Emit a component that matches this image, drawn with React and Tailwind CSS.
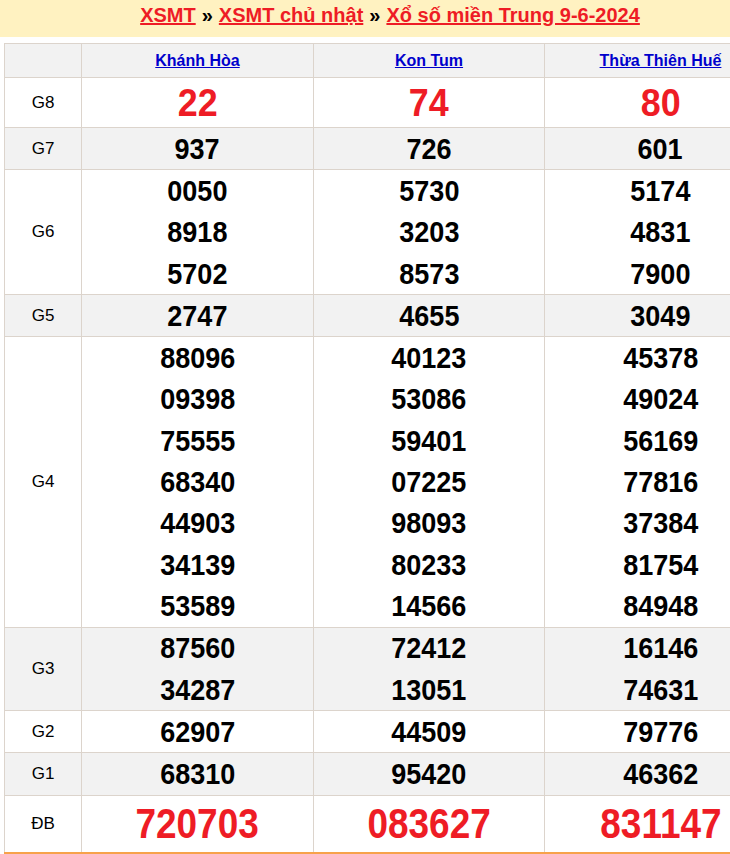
import React from "react";

const provinces = ["Khánh Hòa", "Kon Tum", "Thừa Thiên Huế"];

const rows = [
  { label: "G8", big: true, data: [["22"], ["74"], ["80"]] },
  { label: "G7", data: [["937"], ["726"], ["601"]] },
  {
    label: "G6",
    data: [
      ["0050", "8918", "5702"],
      ["5730", "3203", "8573"],
      ["5174", "4831", "7900"],
    ],
  },
  { label: "G5", data: [["2747"], ["4655"], ["3049"]] },
  {
    label: "G4",
    data: [
      ["88096", "09398", "75555", "68340", "44903", "34139", "53589"],
      ["40123", "53086", "59401", "07225", "98093", "80233", "14566"],
      ["45378", "49024", "56169", "77816", "37384", "81754", "84948"],
    ],
  },
  {
    label: "G3",
    data: [
      ["87560", "34287"],
      ["72412", "13051"],
      ["16146", "74631"],
    ],
  },
  { label: "G2", data: [["62907"], ["44509"], ["79776"]] },
  { label: "G1", data: [["68310"], ["95420"], ["46362"]] },
  { label: "ĐB", db: true, data: [["720703"], ["083627"], ["831147"]] },
];

function Num({ value, big, db }) {
  if (db) {
    return (
      <div className="h-[56px] flex items-center justify-center">
        <span className="inline-block text-[42px] font-bold text-[#ee1c25] scale-x-[0.88] leading-none">
          {value}
        </span>
      </div>
    );
  }
  if (big) {
    return (
      <div className="h-[49px] flex items-center justify-center">
        <span className="inline-block text-[39px] font-bold text-[#ee1c25] scale-x-[0.92] leading-none">
          {value}
        </span>
      </div>
    );
  }
  return (
    <div className="h-[41.3px] flex items-center justify-center">
      <span className="inline-block text-[30px] font-bold text-black scale-x-[0.9] leading-none">
        {value}
      </span>
    </div>
  );
}

export default function App() {
  return (
    <div className="w-[730px] overflow-hidden bg-white">
      <div
        className="w-[780px]"
        style={{ fontFamily: '"Liberation Sans", Arial, sans-serif' }}
      >
        <div className="h-[37px] bg-[#fff2c1] flex items-start justify-center pt-[3px] text-[20px] leading-[24px] font-bold text-black">
          <a href="#" className="text-[#ee1c25] underline">XSMT</a>
          <span className="mx-[6px]">»</span>
          <a href="#" className="text-[#ee1c25] underline">XSMT chủ nhật</a>
          <span className="mx-[6px]">»</span>
          <a href="#" className="text-[#ee1c25] underline">Xổ số miền Trung 9-6-2024</a>
        </div>

        <div className="px-[4px] pt-[6px]">
          <table className="w-[772px] border-collapse table-fixed border-b-[3px] border-b-[#f7a24a]">
            <colgroup>
              <col className="w-[77px]" />
              <col className="w-[232px]" />
              <col className="w-[231px]" />
              <col className="w-[232px]" />
            </colgroup>
            <thead>
              <tr className="bg-[#f2f2f2] h-[34px]">
                <th className="border border-[#dcd4cc]"></th>
                {provinces.map((p) => (
                  <th key={p} className="border border-[#dcd4cc] p-0">
                    <a href="#" className="text-[16px] font-bold text-[#0000cc] underline">
                      {p}
                    </a>
                  </th>
                ))}
              </tr>
            </thead>
            <tbody>
              {rows.map((row, i) => (
                <tr key={row.label} className={i % 2 === 1 ? "bg-[#f2f2f2]" : "bg-white"}>
                  <td className="border border-[#dcd4cc] text-center text-[17px] text-black p-0">
                    {row.label}
                  </td>
                  {row.data.map((col, j) => (
                    <td
                      key={j}
                      className={
                        row.db
                          ? "border border-[#dcd4cc] border-b-[3px] border-b-[#f7a24a] p-0 text-center"
                          : "border border-[#dcd4cc] p-0 text-center"
                      }
                    >
                      {col.map((v) => (
                        <Num key={v} value={v} big={row.big} db={row.db} />
                      ))}
                    </td>
                  ))}
                </tr>
              ))}
            </tbody>
          </table>
        </div>
      </div>
    </div>
  );
}
